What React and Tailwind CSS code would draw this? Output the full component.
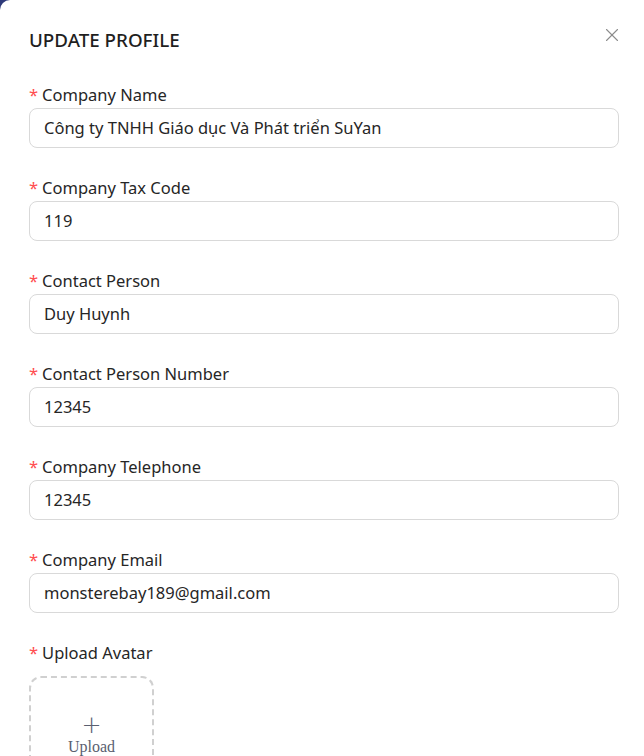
import { X } from 'lucide-react';

const fields = [
  { label: 'Company Name', value: 'Công ty TNHH Giáo dục Và Phát triển SuYan' },
  { label: 'Company Tax Code', value: '119' },
  { label: 'Contact Person', value: 'Duy Huynh' },
  { label: 'Contact Person Number', value: '12345' },
  { label: 'Company Telephone', value: '12345' },
  { label: 'Company Email', value: 'monsterebay189@gmail.com' },
];

export default function App() {
  return (
    <div className="h-[756px] overflow-hidden bg-[#2e3a7a]" style={{ fontFamily: '"Noto Sans", "Open Sans", sans-serif' }}>
      <div className="h-full bg-white rounded-tl-[10px] pl-[29px] pr-[25px] pt-[28px]">
        <div className="flex items-start justify-between">
          <h2 className="text-[18.8px] font-medium text-[#1f1f1f] leading-[24px]">UPDATE PROFILE</h2>
          <button className="mt-[-4px] mr-[-4px] text-[#8c8c8c]">
            <X size={22} strokeWidth={1.2} />
          </button>
        </div>

        <div className="mt-[32px] flex flex-col gap-[29px]">
          {fields.map((f) => (
            <div key={f.label} className="w-[590px]">
              <label className="block text-[16.5px] leading-[22px] text-[#262626] mb-[2px]">
                <span className="text-[#ff4d4f] mr-[4px]">*</span>
                {f.label}
              </label>
              <div className="h-[40px] border border-[#d9d9d9] rounded-[8px] px-[14px] flex items-center text-[16.5px] text-[#262626]">
                {f.value}
              </div>
            </div>
          ))}

          <div>
            <label className="block text-[16.5px] leading-[22px] text-[#262626] mb-[12px]">
              <span className="text-[#ff4d4f] mr-[4px]">*</span>
              Upload Avatar
            </label>
            <div className="w-[125px] h-[118px] border-[2px] border-dashed border-[#d0d0d0] rounded-[12px] flex flex-col items-center justify-center text-[#5a6070]">
              <span className="text-[24px] leading-[22px] font-light" style={{ fontFamily: '"DejaVu Sans", sans-serif' }}>+</span>
              <span className="text-[16px] leading-[20px] mt-[1px]" style={{ fontFamily: '"Liberation Serif", serif' }}>Upload</span>
            </div>
          </div>
        </div>
      </div>
    </div>
  );
}
